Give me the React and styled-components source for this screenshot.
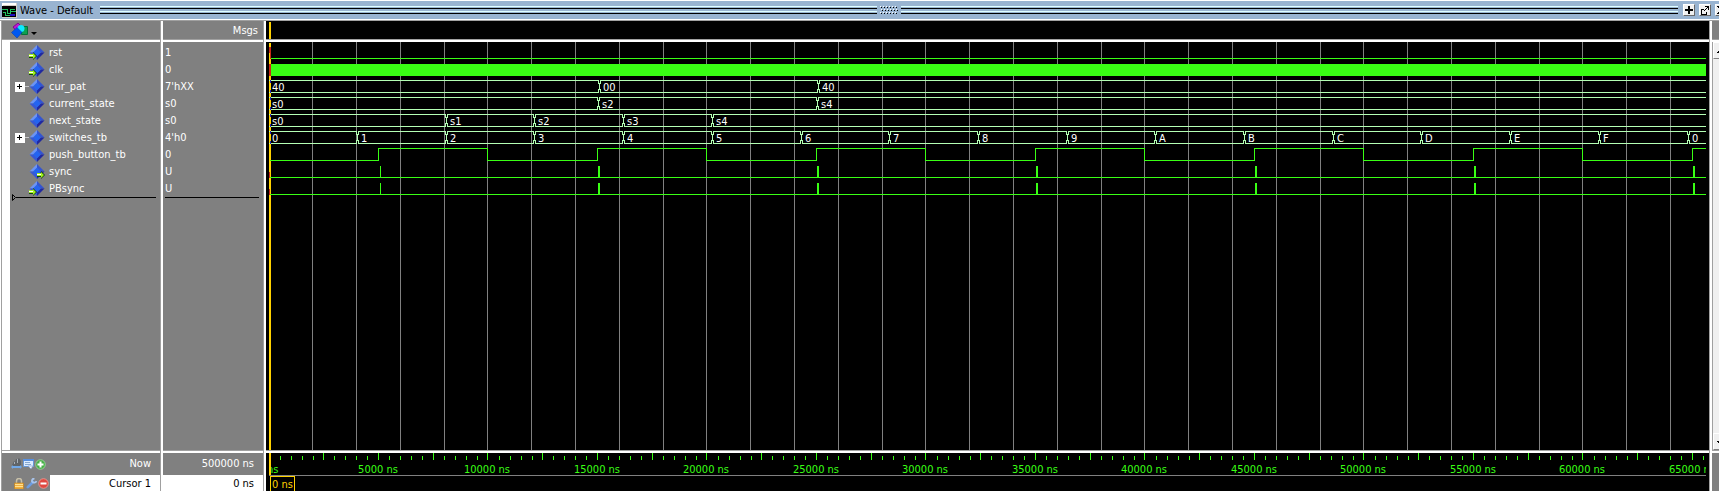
import React, { useLayoutEffect, useRef, useState } from "react";
import styled, { createGlobalStyle } from "styled-components";

const color = {
  caption: "#99b4d1",
  pane: "#808080",
  edge: "#a0a0a0",
  signal: "#39ff14",
  bus: "#b4ffb4",
  cursor: "#ffd200",
  unknown: "#c82814",
  undef: "#2828b4",
};

const GlobalStyle = createGlobalStyle`
  * { box-sizing: border-box; }
  body {
    margin: 0;
    background: #ffffff;
    font-family: "DejaVu Sans Condensed", "DejaVu Sans", sans-serif;
    font-size: 11px;
    line-height: 17px;
    overflow: hidden;
  }
  ul { list-style: none; margin: 0; padding: 0; }
`;

/* ---------- signal data ---------- */

const X0 = 4;
const PX_PER_NS = 0.0219;
const xAt = (t) => Math.floor(X0 - 0.1 + t * PX_PER_NS);
const steps = (n, fn) => Array.from({ length: n }, (_, i) => fn(i));
const countWithin = (width, period) => Math.ceil(width / (period * PX_PER_NS));

const STEP = 4050;
const signals = [
  { name: "rst", value: "1", port: "left", kind: "low" },
  { name: "clk", value: "0", port: "left", kind: "clock" },
  {
    name: "cur_pat", value: "7'hXX", expandable: true, kind: "bus",
    segments: [[0, "40"], [15090, "00"], [25090, "40"]],
  },
  {
    name: "current_state", value: "s0", kind: "bus",
    segments: [[0, "s0"], [15045, "s2"], [25045, "s4"]],
  },
  {
    name: "next_state", value: "s0", kind: "bus",
    segments: [[0, "s0"], [STEP * 2, "s1"], [STEP * 3, "s2"], [STEP * 4, "s3"], [STEP * 5, "s4"]],
  },
  {
    name: "switches_tb", value: "4'h0", expandable: true, kind: "bus",
    segments: steps(100, (i) => [STEP * i, (i % 16).toString(16).toUpperCase()]),
  },
  { name: "push_button_tb", value: "0", kind: "square" },
  { name: "sync", value: "U", port: "right", kind: "pulse" },
  { name: "PBsync", value: "U", port: "left", kind: "pulse" },
];

/* ---------- title bar ---------- */

const Window = styled.main`
  display: flex;
  flex-direction: column;
  min-height: 100vh;
  background: ${color.pane};
`;

const TitleBar = styled.header`
  display: flex;
  align-items: center;
  gap: 3px;
  height: 21px;
  padding: 0 0 1px 2px;
  background: ${color.caption};
  border-top: 1px solid #ffffff;
  border-bottom: 1px solid ${color.edge};
  box-shadow: inset 0 -1px 0 #ffffff;
  overflow: hidden;
`;

const Title = styled.h1`
  margin: 0;
  font-size: 11px;
  font-weight: 400;
  color: #000000;
  white-space: nowrap;
`;

const Handle = styled.div`
  display: flex;
  flex: 1;
  align-items: center;
  gap: 1px;
  min-width: 0;
  padding: 0 2px 0 4px;
`;

const Groove = styled.div`
  flex: 1;
  height: 8px;
  background: linear-gradient(
    #e0ffff 0 1px, ${color.caption} 1px 2px, #000000 2px 3px,
    ${color.caption} 3px 5px, #e0ffff 5px 6px, ${color.caption} 6px 7px, #000000 7px 8px
  );
`;

const TitleButtons = styled.div`
  display: flex;
  gap: 4px;
  width: 36px;
  overflow: hidden;
`;

const TitleButton = styled.button`
  display: flex;
  flex: none;
  width: 12px;
  height: 12px;
  padding: 0;
  border: 1px solid;
  border-color: #ffffff #696969 #696969 #ffffff;
  background: #f0f0f0;
`;

/* ---------- panes ---------- */

const Columns = styled.div`
  display: grid;
  flex: 1;
  grid-template-columns: 160px 103px 1fr 9px;
  border-left: 1px solid #ffffff;
`;

const Pane = styled.section`
  display: flex;
  flex-direction: column;
  min-width: 0;
  background: ${(p) => (p.$dark ? "#000000" : color.pane)};
  border-left: ${(p) => (p.$first ? `1px solid ${color.edge}` : "2px solid #ffffff")};
  border-right: ${(p) => (p.$last ? "0" : `1px solid ${color.edge}`)};
  overflow: hidden;
`;

const PaneHead = styled.div`
  display: flex;
  align-items: center;
  justify-content: ${(p) => (p.$end ? "flex-end" : "flex-start")};
  flex: none;
  height: 21px;
  padding: 0 5px 0 9px;
  color: #ffffff;
  border-bottom: 2px solid #ffffff;
  box-shadow: inset 0 -1px 0 ${color.edge};
`;

const PaneBody = styled.div`
  flex: 1;
  min-height: 0;
  padding-top: 2px;
  border-left: ${(p) => (p.$gutter ? "8px solid #ffffff" : "0")};
`;

const PaneFoot = styled.div`
  flex: none;
  height: 41px;
  border-top: 1px solid ${color.edge};
  box-shadow: inset 0 2px 0 #ffffff;
  padding-top: 2px;
`;

const SignalRow = styled.li`
  display: flex;
  align-items: center;
  height: 17px;
  padding-left: ${(p) => (p.$value ? "2px" : "5px")};
  color: #ffffff;
  white-space: nowrap;
`;

const ExpandSlot = styled.span`
  display: flex;
  align-items: center;
  width: 14px;
`;

const ExpandButton = styled.button`
  display: flex;
  flex: none;
  width: 10px;
  height: 10px;
  padding: 0;
  border: 0;
  background: #ffffff;
`;

const Stub = styled.span`
  flex: 1;
  height: 1px;
  background: #c8c8c8;
`;

const SignalName = styled.span`
  padding-left: 4px;
`;

const InsertLine = styled.div`
  display: flex;
  align-items: center;
  height: 7px;
  margin: -3px 4px 0 2px;
`;

const Rule = styled.span`
  flex: 1;
  height: 1px;
  background: #000000;
`;

const ToolMenu = styled.button`
  display: flex;
  padding: 0;
  border: 0;
  background: none;
`;

const FootRow = styled.div`
  display: flex;
  height: ${(p) => (p.$cursor ? "16px" : "22px")};
  color: ${(p) => (p.$cursor ? "#000000" : "#ffffff")};
`;

const FootTools = styled.div`
  display: flex;
  align-items: center;
  gap: 1px;
  width: 48px;
  padding-left: ${(p) => (p.$indent ? "12px" : "9px")};
`;

const FootTool = styled.button`
  display: flex;
  flex: none;
  padding: 0;
  border: 0;
  background: none;
`;

const FootText = styled.div`
  flex: 1;
  padding-right: 9px;
  text-align: right;
  line-height: ${(p) => (p.$cursor ? "18px" : "22px")};
  background: ${(p) => (p.$cursor ? "#ffffff" : "transparent")};
  white-space: nowrap;
`;

/* ---------- wave pane ---------- */

const Plot = styled.svg`
  display: block;
  width: 100%;
  height: 100%;
`;

const WaveHead = styled.div`
  flex: none;
  height: 21px;
  border-bottom: 2px solid #ffffff;
  box-shadow: inset 0 -1px 0 ${color.edge};
`;

const WaveArea = styled.div`
  flex: 1 1 0;
  min-height: 0;
  overflow: hidden;
`;

const WaveClip = styled.div`
  height: 100%;
  margin-right: 3px;
  overflow: hidden;
`;

const WaveFoot = styled.div`
  flex: none;
  height: 41px;
  padding-top: 3px;
  background: linear-gradient(${color.edge} 0 1px, #ffffff 1px 3px, #000000 3px);
`;

const ScrollPane = styled(Pane)`
  background: #f0f0f0;
`;

const ScrollHead = styled(PaneHead)`
  background: ${color.pane};
`;

const ScrollTrack = styled.div`
  display: flex;
  flex: 1;
  flex-direction: column;
  justify-content: space-between;
  border-left: 1px solid ${color.edge};
`;

const ScrollButton = styled.button`
  display: flex;
  align-items: center;
  width: 16px;
  height: 17px;
  padding: 0;
  border: 1px solid;
  border-color: #ffffff #808080 #808080 #ffffff;
  background: #f0f0f0;
`;

const ScrollFoot = styled(PaneFoot)`
  background: ${color.pane};
`;

/* ---------- icons ---------- */

const WaveIcon = () => (
  <svg width="15" height="15" shapeRendering="crispEdges" aria-hidden="true">
    <path fill="#d4d0c8" d="M0 0h15v15H0z" />
    <path fill="#000" d="M0 3h14v11H0z" />
    <path fill="#fff" d="M0 0h14v2H0zM0 0h1v3H0z" />
    <path fill="none" stroke="#20c060" d="M0 6.500h5v4h3v-4h5M8.500 10v-1.500h5M1 9.500h2.500v3h4" />
    <path fill="#2010c0" d="M8 11h5v2H8z" />
  </svg>
);

const Grip = () => (
  <svg width="22" height="8" shapeRendering="crispEdges" aria-hidden="true">
    {[0, 3, 6].map((y, row) =>
      steps(6, (i) => {
        const x = 2 + i * 3 + (row === 1 ? 1 : 0);
        return (
          <React.Fragment key={`${x}-${y}`}>
            <rect x={x} y={y} width="1" height="1" fill="#fff" />
            <rect x={x + 1} y={y + 1} width="1" height="1" fill="#000" />
          </React.Fragment>
        );
      })
    )}
  </svg>
);

const Glyph = ({ d }) => (
  <svg width="10" height="10" shapeRendering="crispEdges" aria-hidden="true">
    <path d={d} fill="#000" />
  </svg>
);

const PLUS = "M4 1h2v3h3v2H6v3H4V6H1V4h3z";
const UNDOCK = "M1 4h3v1H2v4h4V7h1v3H1zM5 1h4v4H8V3H7v1H6v1H5v1H4V5h1V4h1V3h1V2H5z";
const CLOSE = "M1 1h2v1h1v1h2V2h1V1h2v1H8v1H7v1H6v2h1v1h1v1h1v1H7V8H6V7H4v1H3v1H1V8h1V7h1V6h1V4H3V3H2V2H1z";

const ObjectsIcon = () => (
  <svg width="29" height="17" viewBox="0 0 29 17" aria-hidden="true">
    <path fill="#c018d0" stroke="#7a0c90" d="M2 5l5-4 4 4-5 5z" />
    <path fill="#10a050" stroke="#087038" d="M10.500 4.500h6v8h-6z" />
    <circle cx="10" cy="6.500" r="3.500" fill="#10e8ff" />
    <path fill="#0058f0" stroke="#0038a8" strokeWidth=".5" d="M.5 10.500l5.500-5 5 5-5 5.500z" />
    <path fill="#000" d="M20 10h6l-3 3z" />
  </svg>
);

const SignalIcon = ({ port }) => (
  <svg width="16" height="17" viewBox="0 0 16 17" aria-hidden="true">
    <path fill="#6c94f4" d="M8 1L.5 8.500H5L8 5z" />
    <path fill="#3454d0" d="M8 1l7.500 7.500H11L8 5z" />
    <path fill="#3858d4" d="M.5 8.500L8 16v-4L5 8.500z" />
    <path fill="#2028a0" d="M15.500 8.500L8 16v-4l3-3.500z" />
    <path fill="#2464f0" d="M8 4.500l4 4-4 4-4-4z" />
    {port && (
      <g transform={port === "left" ? "translate(0 8)" : "translate(8 8)"}>
        <path fill="#104010" d="M0 2h4V0l4 4-4 4V6H0z" />
        <path fill="#a0f020" d="M0 2h4V1l3 3-3 3V5H0z" />
        <path fill="#fff" d="M0 3h4v1H0z" />
      </g>
    )}
  </svg>
);

const PlusBox = () => (
  <svg width="10" height="10" shapeRendering="crispEdges" aria-hidden="true">
    <path fill="#000" d="M4 2h1v2h2v1H5v2H4V5H2V4h2z" />
  </svg>
);

const SnapIcon = () => (
  <svg width="11" height="12" viewBox="0 0 11 12" aria-hidden="true">
    <path fill="#606468" d="M1 7l2-4 1 1 1-3h2l1-1 2 3v5H1z" />
    <path fill="#a8b0b8" d="M6 1h1v4H6zM3 4h1v2H3z" />
    <path fill="#70a8e8" d="M0 9l2-2v1h7V7l2 2-2 2v-1H2v1z" />
  </svg>
);

const NoteIcon = () => (
  <svg width="11" height="12" viewBox="0 0 11 12" aria-hidden="true">
    <path fill="#dcecff" stroke="#6898d8" d="M.5 1.500h10v7h-10z" />
    <path fill="#5890e0" d="M0 1h11v2H0z" />
    <path fill="#88a8d0" d="M2 4h5v1H2zM2 6h6v1H2z" />
    <path fill="#f0f4ff" stroke="#7898c8" strokeWidth=".6" d="M5 8h5l-2 3z" />
  </svg>
);

const RoundIcon = ({ fill, edge, plus }) => (
  <svg width="11" height="11" viewBox="0 0 11 11" aria-hidden="true">
    <circle cx="5.500" cy="5.500" r="4.800" fill={fill} stroke={edge} strokeWidth=".8" />
    <path fill="#fff" d={plus ? "M4.500 2.500h2v2h2v2h-2v2h-2v-2h-2v-2h2z" : "M2.500 4.500h6v2h-6z"} />
  </svg>
);

const LockIcon = () => (
  <svg width="11" height="11" viewBox="0 0 11 11" aria-hidden="true">
    <path fill="none" stroke="#c8c0a8" strokeWidth="1.500" d="M2.500 6V3a2.500 2.500 0 015 0v2" />
    <path fill="#f0b040" stroke="#c08020" strokeWidth=".6" d="M.5 5h9v6h-9z" />
    <path fill="#ffe090" d="M1 6h8v1H1zM1 8h8v1H1z" />
  </svg>
);

const WrenchIcon = () => (
  <svg width="11" height="11" viewBox="0 0 11 11" aria-hidden="true">
    <path fill="none" stroke="#6c9ce0" strokeWidth="2.600" strokeLinecap="round" d="M1.800 9.200L7 4" />
    <path fill="none" stroke="#a8c4ec" strokeWidth="1.800" d="M8.500.5A2.500 2.500 0 006 3.500 2.500 2.500 0 0010.500 3" />
  </svg>
);

/* ---------- trace shapes; y = 0 is the top of a 17px row ---------- */

function BusTrace({ segments, width }) {
  const shown = segments.filter(([t]) => xAt(t) < width - 8);
  return shown.map(([t, label], i) => {
    const start = xAt(t) + 1;
    const end = i + 1 < shown.length ? xAt(shown[i + 1][0]) - 1 : width + 4;
    return (
      <g key={t}>
        <path fill="none" stroke={color.bus} d={`M${start} 2.500H${end + 0.5}v3h1v6h-1v3H${start}`} />
        {t > 0 && <path fill="none" stroke={color.bus} d={`M${start + 0.5} 2.500v3h-1v6h1v3`} />}
        {t === 0 && <path stroke={color.undef} d={`M${X0 + 1.5} 2v13`} strokeDasharray="3 7 3" />}
        <text x={start + 3} y="13" fill="#ffffff">{label}</text>
      </g>
    );
  });
}

function SquareTrace({ width }) {
  const d = steps(countWithin(width, 10000), (i) => {
    const t = 5000 + i * 10000;
    return `H${xAt(t) + 0.5}V2.500H${xAt(t + 5000) + 0.5}V14.500`;
  });
  return <path fill="none" stroke={color.signal} d={`M${X0 + 1} 14.500${d.join("")}`} />;
}

function PulseTrace({ width }) {
  return (
    <g fill={color.signal}>
      <rect x={X0 + 1} y="14" width={width} height="1" />
      <rect x={xAt(5000) + 2} y="3" width="1" height="11" />
      {steps(countWithin(width, 10000), (i) => (
        <rect key={i} x={xAt(15000 + i * 10000) + 1} y="3" width="2" height="11" />
      ))}
      <rect x={X0} y="9" width="1" height="6" fill={color.unknown} />
    </g>
  );
}

function LevelTrace({ clock, width }) {
  return (
    <g>
      <rect x={X0 + 2} y={clock ? 3 : 14} width={width} height={clock ? 12 : 1} fill={color.signal} />
      <rect x={X0} y="3" width="2" height={clock ? 12 : 6} fill={color.unknown} />
      <rect x={X0 + 1} y="9" width="1" height="6" fill={color.unknown} />
    </g>
  );
}

const Trace = ({ signal, width }) => {
  if (signal.kind === "bus") return <BusTrace segments={signal.segments} width={width} />;
  if (signal.kind === "square") return <SquareTrace width={width} />;
  if (signal.kind === "pulse") return <PulseTrace width={width} />;
  return <LevelTrace clock={signal.kind === "clock"} width={width} />;
};

function Waves({ width }) {
  return (
    <Plot shapeRendering="crispEdges">
      {steps(countWithin(width, 2000), (i) => (
        <rect key={i} x={xAt((i + 1) * 2000) - 1} y="0" width="1" height="100%" fill="#808080" />
      ))}
      <rect x={X0 - 1} y="1" width="2" height="100%" fill={color.cursor} />
      {signals.map((s, i) => (
        <g key={s.name} transform={`translate(-1 ${2 + i * 17})`}>
          <Trace signal={s} width={width} />
        </g>
      ))}
    </Plot>
  );
}

function Ruler({ width }) {
  return (
    <Plot shapeRendering="crispEdges">
      {steps(countWithin(width, 500), (i) => {
        const t = (i + 1) * 500;
        const major = t % 2500 === 0;
        const x = major ? xAt(t) - 1 : Math.round(X0 - 1.3 + t * PX_PER_NS);
        return <rect key={t} x={x} y={major ? 0 : 3} width="1" height={major ? 7 : 4} fill={color.signal} />;
      })}
      {steps(countWithin(width, 5000), (i) => (
        <text key={i} x={xAt(i * 5000) - 1} y="20" textAnchor="middle" fill={color.signal}>
          {`${i * 5000} ns`}
        </text>
      ))}
      <rect x="0" y="0" width="3" height="22" fill="#000" />
      <rect x={X0 - 1} y="0" width="2" height="22" fill={color.cursor} />
      <rect x={X0 - 1} y="22" width="100%" height="1" fill="#808080" />
      <rect x={X0 + 0.5} y="23.500" width="24" height="20" fill="#000" stroke={color.cursor} />
      <text x={X0 + 2} y="35" fill={color.cursor}>0 ns</text>
    </Plot>
  );
}

function WavePane() {
  const area = useRef(null);
  const [width, setWidth] = useState(0);

  useLayoutEffect(() => {
    const measure = () => setWidth(area.current.clientWidth);
    measure();
    window.addEventListener("resize", measure);
    return () => window.removeEventListener("resize", measure);
  }, []);

  return (
    <Pane $dark>
      <WaveHead>
        <Plot shapeRendering="crispEdges">
          <rect x={X0 - 1} y="1" width="2" height="17" fill={color.cursor} />
        </Plot>
      </WaveHead>
      <WaveArea>
        <WaveClip ref={area}><Waves width={width} /></WaveClip>
      </WaveArea>
      <WaveFoot>
        <WaveClip><Ruler width={width} /></WaveClip>
      </WaveFoot>
    </Pane>
  );
}

/* ---------- page ---------- */

export default function App() {
  return (
    <Window>
      <GlobalStyle />
      <TitleBar>
        <WaveIcon />
        <Title>Wave - Default</Title>
        <Handle>
          <Groove />
          <Grip />
          <Groove />
        </Handle>
        <TitleButtons>
          <TitleButton aria-label="Zoom"><Glyph d={PLUS} /></TitleButton>
          <TitleButton aria-label="Undock"><Glyph d={UNDOCK} /></TitleButton>
          <TitleButton aria-label="Close"><Glyph d={CLOSE} /></TitleButton>
        </TitleButtons>
      </TitleBar>

      <Columns>
        <Pane $first>
          <PaneHead>
            <ToolMenu aria-label="Objects"><ObjectsIcon /></ToolMenu>
          </PaneHead>
          <PaneBody $gutter>
            <ul>
              {signals.map((s) => (
                <SignalRow key={s.name}>
                  <ExpandSlot>
                    {s.expandable && (
                      <>
                        <ExpandButton aria-label={`Expand ${s.name}`}><PlusBox /></ExpandButton>
                        <Stub />
                      </>
                    )}
                  </ExpandSlot>
                  <SignalIcon port={s.port} />
                  <SignalName>{s.name}</SignalName>
                </SignalRow>
              ))}
            </ul>
            <InsertLine>
              <svg width="4" height="7" aria-hidden="true">
                <path fill="none" stroke="#000" d="M.5 .5v6l3-3z" />
              </svg>
              <Rule />
            </InsertLine>
          </PaneBody>
          <PaneFoot>
            <FootRow>
              <FootTools>
                <FootTool aria-label="Snap"><SnapIcon /></FootTool>
                <FootTool aria-label="Notes"><NoteIcon /></FootTool>
                <FootTool aria-label="Add cursor"><RoundIcon plus fill="#48b048" edge="#a0d8a0" /></FootTool>
              </FootTools>
              <FootText>Now</FootText>
            </FootRow>
            <FootRow $cursor>
              <FootTools $indent>
                <FootTool aria-label="Lock cursor"><LockIcon /></FootTool>
                <FootTool aria-label="Edit cursor"><WrenchIcon /></FootTool>
                <FootTool aria-label="Remove cursor"><RoundIcon fill="#e04840" edge="#f0a098" /></FootTool>
              </FootTools>
              <FootText $cursor>Cursor 1</FootText>
            </FootRow>
          </PaneFoot>
        </Pane>

        <Pane>
          <PaneHead $end>Msgs</PaneHead>
          <PaneBody>
            <ul>
              {signals.map((s) => (
                <SignalRow key={s.name} $value>{s.value}</SignalRow>
              ))}
            </ul>
            <InsertLine><Rule /></InsertLine>
          </PaneBody>
          <PaneFoot>
            <FootRow><FootText>500000 ns</FootText></FootRow>
            <FootRow $cursor><FootText $cursor>0 ns</FootText></FootRow>
          </PaneFoot>
        </Pane>

        <WavePane />

        <ScrollPane $last>
          <ScrollHead />
          <ScrollTrack>
            <ScrollButton aria-label="Scroll up"><Glyph d="M6 4h1v1h1v1h1v1H3V6h1V5h1V4z" /></ScrollButton>
            <ScrollButton aria-label="Scroll down"><Glyph d="M3 4h7v1H9v1H8v1H7v1H6V7H5V6H4V5H3z" /></ScrollButton>
          </ScrollTrack>
          <ScrollFoot />
        </ScrollPane>
      </Columns>
    </Window>
  );
}
